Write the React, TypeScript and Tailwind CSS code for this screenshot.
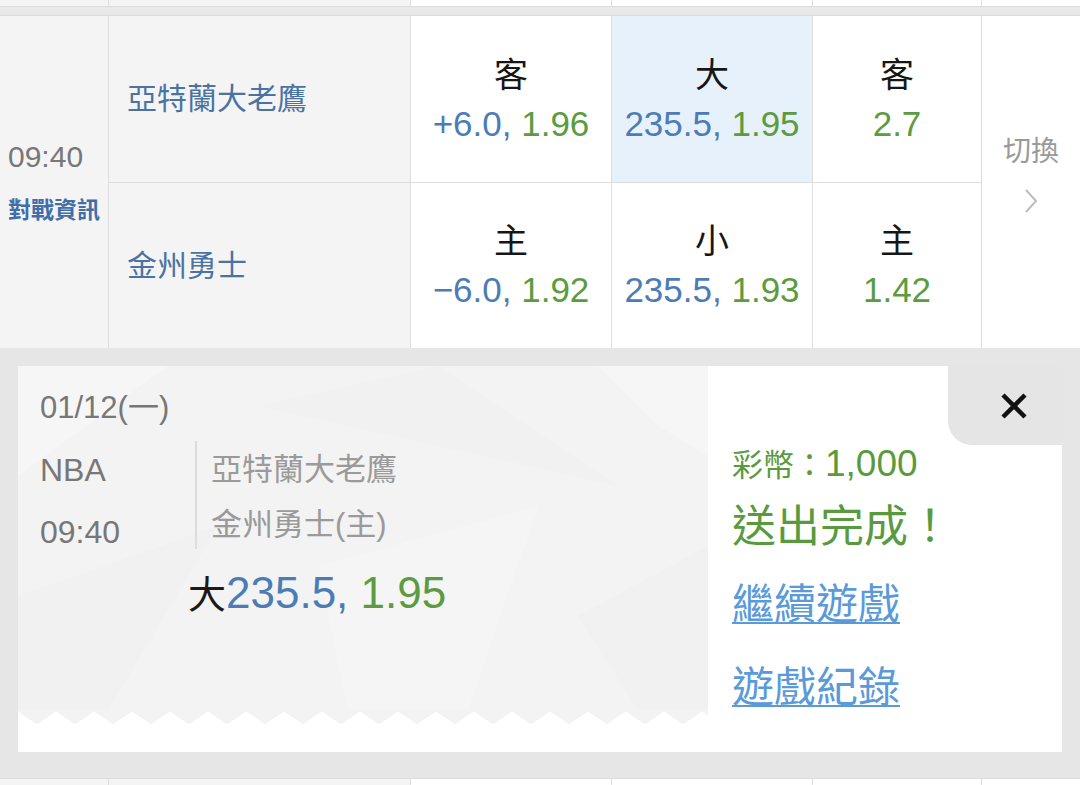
import React from 'react';

const GRID = 'grid grid-cols-[109px_302px_201px_201px_169px_98px]';

type Odds = { label: string; line?: string; odds: string; hl?: boolean };

const OddsCell: React.FC<Odds & { last?: boolean }> = ({ label, line, odds, hl, last }) => (
    <div className={`flex flex-col items-center justify-center border-r border-[#dedede] ${last ? '' : 'border-b'} ${hl ? 'bg-[#e6f1fc]' : 'bg-white'}`}>
        <div className="text-[34px] leading-none text-[#161616]">{label}</div>
        <div className="mt-[14px] text-[35px] leading-none whitespace-nowrap">
            {line && <span className="text-[#4c7cb6]">{line}, </span>}
            <span className="text-[#5c9b3f]">{odds}</span>
        </div>
    </div>
);

// bottom zigzag of the ticket
const Zigzag = () => {
    let d = 'M0 0';
    for (let x = 0; x < 690; x += 38) {
        d += ` L${x + 19} 13 L${x + 38} 0`;
    }
    d += ' Z';
    return (
        <svg width="690" height="17" viewBox="0 0 690 17" className="block">
            <path d={d} fill="#f3f3f3" stroke="#f3f3f3" strokeWidth="4" strokeLinejoin="round" />
        </svg>
    );
};

const StubRow = () => (
    <div className={`${GRID} h-[6px]`}>
        <div className="bg-[#f4f4f4] border-r border-[#dedede]" />
        <div className="bg-[#f4f4f4] border-r border-[#dedede]" />
        <div className="bg-white border-r border-[#dedede]" />
        <div className="bg-white border-r border-[#dedede]" />
        <div className="bg-white border-r border-[#dedede]" />
        <div className="bg-white" />
    </div>
);

export default function App() {
    return (
        <div className="w-[1080px] h-[785px] overflow-hidden flex flex-col bg-[#e6e6e6] font-['Liberation_Sans','Noto_Sans_CJK_TC',sans-serif]">
            <StubRow />
            <div className="h-[10px] bg-[#e9e9e9] border-y border-[#dcdcdc]" />

            {/* match row */}
            <div className={`${GRID} grid-rows-[167px_165px] h-[332px] border-b border-[#dedede]`}>
                <div className="row-span-2 bg-[#f4f4f4] border-r border-[#dedede] flex flex-col justify-center pl-[8px]">
                    <div className="text-[30px] leading-none text-[#777]">09:40</div>
                    <div className="mt-[27px] text-[23px] leading-none font-bold text-[#3f6ea8]">對戰資訊</div>
                </div>
                <div className="bg-[#f4f4f4] border-r border-b border-[#dedede] flex items-center pl-[18px] text-[30px] leading-none text-[#4a73a3]">亞特蘭大老鷹</div>
                <OddsCell label="客" line="+6.0" odds="1.96" />
                <OddsCell label="大" line="235.5" odds="1.95" hl />
                <OddsCell label="客" odds="2.7" />
                <div className="row-span-2 bg-white flex flex-col items-center justify-center pb-[12px]">
                    <div className="text-[28px] leading-none text-[#9a9a9a]">切換</div>
                    <svg width="16" height="26" viewBox="0 0 16 26" className="mt-[22px]">
                        <polyline points="3,2 13,13 3,24" fill="none" stroke="#bdbdbd" strokeWidth="2" />
                    </svg>
                </div>
                <div className="bg-[#f4f4f4] border-r border-[#dedede] flex items-center pl-[18px] text-[30px] leading-none text-[#4a73a3]">金州勇士</div>
                <OddsCell label="主" line="−6.0" odds="1.92" last />
                <OddsCell label="小" line="235.5" odds="1.93" last />
                <OddsCell label="主" odds="1.42" last />
            </div>

            {/* confirmation */}
            <div className="h-[430px] px-[18px] pt-[18px] pb-[26px]">
                <div className="h-[386px] flex bg-white">
                    <div className="w-[690px] flex flex-col">
                        <div className="relative flex-1 bg-[#f3f3f3] overflow-hidden pl-[22px] pt-[26px]">
                            <svg className="absolute inset-0" width="690" height="344" viewBox="0 0 690 344">
                                <polygon points="0,0 150,0 0,110" fill="#f6f6f6" />
                                <polygon points="240,40 420,0 600,120" fill="#f1f1f1" />
                                <polygon points="580,0 690,0 690,90 640,60" fill="#f6f6f6" />
                                <polygon points="0,230 200,160 90,344 0,344" fill="#f1f1f1" />
                                <polygon points="300,200 520,140 450,344 330,344" fill="#f5f5f5" />
                                <polygon points="560,250 690,180 690,344 620,344" fill="#f1f1f1" />
                            </svg>
                            <div className="relative">
                                <div className="text-[31px] leading-none text-[#777]">01/12(一)</div>
                                <div className="mt-[18px] flex h-[108px]">
                                    <div className="w-[155px] flex flex-col">
                                        <div className="mt-[13px] text-[32px] leading-none text-[#777]">NBA</div>
                                        <div className="mt-[30px] text-[32px] leading-none text-[#777]">09:40</div>
                                    </div>
                                    <div className="border-l-2 border-[#dcdcdc] pl-[14px] flex flex-col">
                                        <div className="mt-[13px] text-[31px] leading-none text-[#9a9a9a]">亞特蘭大老鷹</div>
                                        <div className="mt-[24px] text-[31px] leading-none text-[#9a9a9a]">金州勇士(主)</div>
                                    </div>
                                </div>
                                <div className="mt-[22px] ml-[148px] text-[40px] leading-none whitespace-nowrap">
                                    <span className="text-[#1a1a1a] text-[38px]">大</span>
                                    <span className="text-[#4c7cb6] text-[44px]">235.5, </span>
                                    <span className="text-[#5c9b3f] text-[44px]">1.95</span>
                                </div>
                            </div>
                        </div>
                        <Zigzag />
                        <div className="h-[26px]" />
                    </div>

                    <div className="relative flex-1 bg-white pl-[24px] pt-[79px]">
                        <div className="absolute top-0 right-0 w-[114px] h-[79px] bg-[#e5e5e5] rounded-bl-[24px] flex items-center justify-center pl-[18px]">
                            <svg width="28" height="28" viewBox="0 0 28 28">
                                <path d="M3 3 L25 25 M25 3 L3 25" stroke="#111" strokeWidth="4.5" />
                            </svg>
                        </div>
                        <div className="text-[31px] leading-[37px] text-[#5a9a3e] whitespace-nowrap">
                            彩幣：<span className="text-[37px]">1,000</span>
                        </div>
                        <div className="mt-[21px] text-[44px] leading-none text-[#5a9a3e]">送出完成！</div>
                        <div className="mt-[35px] text-[42px] leading-none text-[#5b9ad9] underline decoration-2 underline-offset-[3px]">繼續遊戲</div>
                        <div className="mt-[41px] text-[42px] leading-none text-[#5b9ad9] underline decoration-2 underline-offset-[3px]">遊戲紀錄</div>
                    </div>
                </div>
            </div>

            <div className="border-t border-[#dcdcdc]">
                <StubRow />
            </div>
        </div>
    );
}
